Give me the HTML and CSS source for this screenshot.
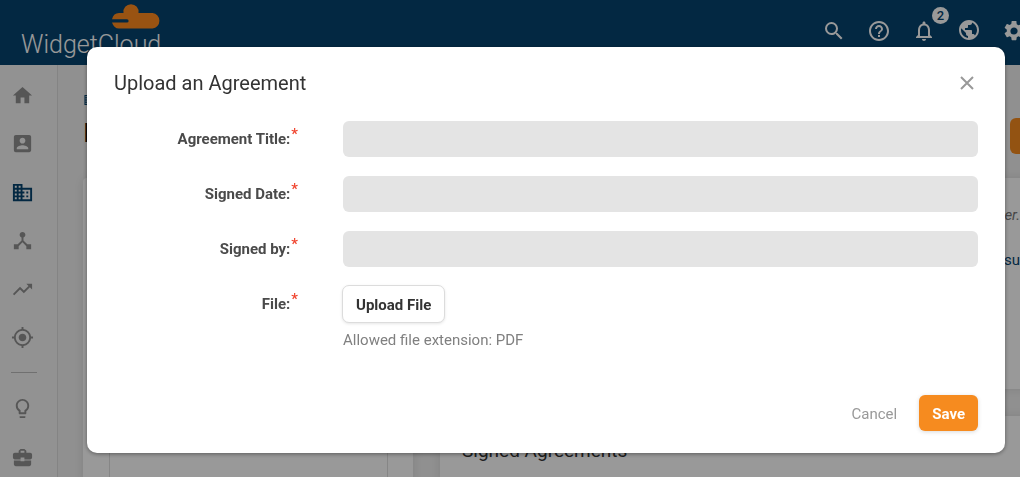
FILE: index.html
```
<!DOCTYPE html>
<html lang="en">
<head>
<meta charset="utf-8">
<title>WidgetCloud</title>
<link rel="stylesheet" href="styles.css">
</head>
<body>
<header class="topbar">
  <a class="logo" href="#">
    <svg class="logo-cloud" width="50" height="25" viewBox="0 0 50 25" aria-hidden="true"><path fill="#ff8a1e" d="M8 9h4.500a7.600 7.600 0 1 1 15 0H41.500a7.800 7.800 0 0 1 0 15.500H8Q3 24.500 1 18.500H16a1.500 1.500 0 0 0 0-3.200H1Q2.500 9 8 9z"/></svg>
    <span class="logo-name">WidgetCloud</span>
  </a>
  <nav class="tools" aria-label="Tools">
    <button class="tool" aria-label="Search"><svg viewBox="0 0 24 24"><path d="M15.500 14h-.79l-.28-.27A6.470 6.470 0 0 0 16 9.500 6.500 6.500 0 1 0 9.500 16c1.610 0 3.090-.59 4.230-1.570l.27.28v.79l5 4.990L20.490 19l-4.990-5zm-6 0C7.010 14 5 11.990 5 9.500S7.010 5 9.500 5 14 7.010 14 9.500 11.990 14 9.500 14z"/></svg></button>
    <button class="tool" aria-label="Help"><svg viewBox="0 0 24 24"><path d="M11 18h2v-2h-2v2zm1-16C6.480 2 2 6.480 2 12s4.480 10 10 10 10-4.480 10-10S17.520 2 12 2zm0 18c-4.410 0-8-3.590-8-8s3.590-8 8-8 8 3.590 8 8-3.590 8-8 8zm0-14c-2.210 0-4 1.790-4 4h2c0-1.100.9-2 2-2s2 .9 2 2c0 2-3 1.750-3 5h2c0-2.250 3-2.500 3-5 0-2.210-1.790-4-4-4z"/></svg></button>
    <button class="tool" aria-label="Notifications"><svg viewBox="0 0 24 24"><path d="M12 22c1.100 0 2-.9 2-2h-4c0 1.100.9 2 2 2zm6-6v-5c0-3.070-1.630-5.640-4.500-6.320V4c0-.83-.67-1.500-1.500-1.500s-1.500.67-1.500 1.500v.68C7.640 5.360 6 7.920 6 11v5l-2 2v1h16v-1l-2-2zm-2 1H8v-6c0-2.480 1.510-4.500 4-4.500s4 2.020 4 4.500v6z"/></svg><span class="badge">2</span></button>
    <button class="tool" aria-label="Language"><svg viewBox="0 0 24 24"><path d="M12 2C6.480 2 2 6.480 2 12s4.480 10 10 10 10-4.480 10-10S17.520 2 12 2zm-1 17.930c-3.950-.49-7-3.850-7-7.930 0-.62.080-1.210.21-1.790L9 15v1c0 1.100.9 2 2 2v1.930zm6.900-2.540c-.26-.81-1-1.390-1.900-1.390h-1v-3c0-.55-.45-1-1-1H8v-2h2c.55 0 1-.45 1-1V7h2c1.100 0 2-.9 2-2v-.41c2.930 1.190 5 4.060 5 7.410 0 2.080-.8 3.970-2.100 5.390z" transform="translate(0 -1)"/></svg></button>
    <button class="tool" aria-label="Settings"><svg viewBox="0 0 24 24"><path d="M19.140 12.940c.04-.3.060-.61.060-.94s-.02-.64-.07-.94l2.030-1.580a.49.49 0 0 0 .12-.61l-1.920-3.320a.488.488 0 0 0-.59-.22l-2.390.96a7 7 0 0 0-1.620-.94l-.36-2.540A.484.484 0 0 0 13.920 2h-3.840c-.24 0-.43.17-.47.41l-.36 2.540c-.59.24-1.130.57-1.620.94l-2.390-.96c-.22-.08-.47 0-.59.22L2.740 8.470c-.12.21-.08.47.12.61l2.030 1.580c-.05.3-.09.63-.09.94s.02.64.07.94l-2.030 1.580a.49.49 0 0 0-.12.61l1.920 3.320c.12.22.37.29.59.22l2.390-.96c.5.38 1.030.7 1.620.94l.36 2.540c.05.24.24.41.48.41h3.840c.24 0 .44-.17.47-.41l.36-2.540c.59-.24 1.130-.56 1.620-.94l2.390.96c.22.08.47 0 .59-.22l1.920-3.320a.47.47 0 0 0-.12-.61l-2.010-1.580zM12 15.600A3.610 3.610 0 0 1 8.400 12c0-1.980 1.620-3.600 3.600-3.600s3.600 1.620 3.600 3.600-1.620 3.600-3.600 3.600z"/></svg></button>
  </nav>
</header>

<div class="shell">
  <nav class="sidebar" aria-label="Main">
    <div class="side-group side-main">
      <a href="#" aria-label="Home"><svg viewBox="0 0 24 24"><path d="M10 20v-6h4v6h5v-8h3L12 3 2 12h3v8z"/></svg></a>
      <a href="#" aria-label="Contacts"><svg viewBox="0 0 24 24"><path d="M3 5v14a2 2 0 0 0 2 2h14c1.100 0 2-.9 2-2V5c0-1.100-.9-2-2-2H5a2 2 0 0 0-2 2zm12 4c0 1.660-1.340 3-3 3s-3-1.340-3-3 1.340-3 3-3 3 1.340 3 3zm-9 8c0-2 4-3.100 6-3.100s6 1.100 6 3.100v1H6v-1z"/></svg></a>
      <a href="#" class="current" aria-label="Companies"><svg viewBox="0 0 24 24"><path d="M12 7V3H2v18h20V7H12zM6 19H4v-2h2v2zm0-4H4v-2h2v2zm0-4H4V9h2v2zm0-4H4V5h2v2zm4 12H8v-2h2v2zm0-4H8v-2h2v2zm0-4H8V9h2v2zm0-4H8V5h2v2zm10 12h-8v-2h2v-2h-2v-2h2v-2h-2V9h8v10zm-2-8h-2v2h2v-2zm0 4h-2v2h2v-2z"/></svg></a>
      <a href="#" aria-label="Network"><svg viewBox="0 0 24 24"><path d="M17 16l-4-4V8.820C14.160 8.400 15 7.300 15 6c0-1.660-1.340-3-3-3S9 4.340 9 6c0 1.300.84 2.400 2 2.820V12l-4 4H3v5h5v-3.050l4-4.200 4 4.200V21h5v-5h-4z"/></svg></a>
      <a href="#" aria-label="Trends"><svg viewBox="0 0 24 24"><path d="M16 6l2.290 2.290-4.880 4.880-4-4L2 16.590 3.410 18l6-6 4 4 6.300-6.290L22 12V6z"/></svg></a>
      <a href="#" aria-label="Targets"><svg viewBox="0 0 24 24"><path d="M12 8c-2.210 0-4 1.790-4 4s1.790 4 4 4 4-1.790 4-4-1.790-4-4-4zm8.940 3A8.994 8.994 0 0 0 13 3.060V1h-2v2.060A8.994 8.994 0 0 0 3.060 11H1v2h2.060A8.994 8.994 0 0 0 11 20.940V23h2v-2.060A8.994 8.994 0 0 0 20.940 13H23v-2h-2.060zM12 19c-3.870 0-7-3.130-7-7s3.130-7 7-7 7 3.130 7 7-3.130 7-7 7z"/></svg></a>
    </div>
    <hr class="side-rule">
    <div class="side-group side-extra">
      <a href="#" aria-label="Ideas"><svg viewBox="0 0 24 24"><path d="M9 21c0 .55.45 1 1 1h4c.55 0 1-.45 1-1v-1H9v1zm3-19C8.140 2 5 5.140 5 9c0 2.380 1.190 4.470 3 5.740V17c0 .55.45 1 1 1h6c.55 0 1-.45 1-1v-2.260c1.810-1.270 3-3.360 3-5.740 0-3.860-3.140-7-7-7zm2.850 11.100l-.85.6V16h-4v-2.300l-.85-.6A4.997 4.997 0 0 1 7 9c0-2.760 2.240-5 5-5s5 2.240 5 5c0 1.630-.8 3.160-2.150 4.100z"/></svg></a>
      <a href="#" aria-label="Business"><svg viewBox="0 0 24 24"><path d="M10 16v-1H3.010L3 19c0 1.110.89 2 2 2h14c1.110 0 2-.89 2-2v-4h-7v1h-4zm10-9h-4.010V5l-2-2h-4l-2 2v2H4c-1.100 0-2 .9-2 2v3c0 1.110.89 2 2 2h6v-2h4v2h6c1.100 0 2-.9 2-2V9c0-1.100-.9-2-2-2zm-6 0h-4V5h4v2z"/></svg></a>
    </div>
  </nav>

  <main class="page">
    <div class="page-head">
      <div class="page-title">
        <svg class="crumb" viewBox="0 0 20 18" aria-hidden="true"><path d="M0 0h10v4h10v14H0zM2 2v2h2V2zm0 4v2h2V6zm0 4v2h2v-2zm0 4v2h2v-2z"/></svg>
        <h1>I</h1>
      </div>
      <button class="page-action" aria-label="Add"></button>
    </div>
    <div class="columns">
      <section class="card profile"><div class="profile-inner"></div></section>
      <div class="stack">
        <section class="card summary">
          <p class="note">er.</p>
          <a class="results" href="#">esu</a>
        </section>
        <section class="card agreements"><h2>Signed Agreements</h2></section>
      </div>
    </div>
  </main>
</div>

<div class="overlay">
  <form class="modal" role="dialog" aria-modal="true" aria-labelledby="modal-title">
    <div class="modal-head">
      <h2 id="modal-title">Upload an Agreement</h2>
      <button type="button" class="close" aria-label="Close"><svg viewBox="0 0 16 16"><path d="M2 2l12 12M14 2L2 14"/></svg></button>
    </div>
    <div class="fields">
      <label for="title">Agreement Title:<span class="req">*</span></label>
      <input id="title" type="text" required>
      <label for="date">Signed Date:<span class="req">*</span></label>
      <input id="date" type="text" required>
      <label for="by">Signed by:<span class="req">*</span></label>
      <input id="by" type="text" required>
      <label for="file">File:<span class="req">*</span></label>
      <div class="file">
        <button type="button" id="file" class="upload">Upload File</button>
        <p class="hint">Allowed file extension: PDF</p>
      </div>
    </div>
    <div class="modal-foot">
      <button type="button" class="cancel">Cancel</button>
      <button type="submit" class="save">Save</button>
    </div>
  </form>
</div>
</body>
</html>
```
FILE: styles.css
```
* { box-sizing: border-box; }
body {
  margin: 0;
  height: 100vh;
  overflow: hidden;
  display: flex;
  flex-direction: column;
  background: #f1f1f1;
  color: #333;
  font: 15px/20px Roboto, "Liberation Sans", sans-serif;
}
h1, h2, p { margin: 0; font-weight: 400; }
a { color: inherit; text-decoration: none; }
button { font: inherit; border: 0; padding: 0; background: none; cursor: pointer; }
svg { display: block; fill: currentColor; }

.topbar {
  flex: none;
  height: 65px;
  display: flex;
  justify-content: space-between;
  background: #06446f;
  color: #fff;
}
.logo { display: flex; flex-direction: column; padding: 4px 0 0 21px; }
.logo-cloud { align-self: flex-end; }
.logo-name { font-size: 25px; line-height: 32px; font-weight: 300; }
.tools { display: flex; gap: 21px; padding-top: 19px; margin-right: -6px; }
.tool { position: relative; width: 24px; height: 24px; color: #fff; }
.badge {
  position: absolute;
  top: -12px;
  left: 20px;
  width: 17px;
  height: 17px;
  border-radius: 50%;
  background: #fff;
  color: #06446f;
  font-size: 13px;
  line-height: 17px;
  font-weight: 500;
}

.shell { flex: 1; min-height: 0; display: flex; overflow: hidden; }
.sidebar {
  flex: none;
  width: 58px;
  padding-top: 19px;
  border-right: 1px solid #dcdcdc;
  background: #f4f4f4;
  color: #8f8f8f;
}
.side-group { display: flex; flex-direction: column; align-items: center; justify-content: space-between; padding-right: 12px; }
.side-group a { width: 23px; height: 23px; }
.side-main { height: 265px; }
.side-extra { gap: 26px; }
.side-rule { margin: 23px 20px 24px 11px; border: 0; border-top: 1px solid #bbb; }
.current { color: #06446f; }

.page { flex: 1; min-width: 0; overflow: hidden; padding: 30px 0 0 25px; }
.page-head { display: flex; justify-content: space-between; height: 83px; }
.crumb { width: 12px; height: 10px; margin-left: 1px; color: #06446f; }
.page-title h1 { font-size: 26px; line-height: 32px; margin-top: 12px; color: #111; }
.page-action { width: 60px; height: 36px; margin: 23px -50px 0 0; border-radius: 6px; background: #f68b1f; }
.columns { display: grid; grid-template-columns: 330px 1fr; gap: 27px; margin-right: -30px; }
.card { background: #fff; border-radius: 4px; box-shadow: 0 0 12px rgba(0, 0, 0, .1); }
.profile { padding: 26px 25px 0 26px; }
.profile-inner { height: 100%; border: 1px solid #e0e0e0; border-bottom: 0; }
.stack { display: grid; gap: 27px; }
.summary { height: 211px; padding: 27px 30px; text-align: right; }
.note { font-style: italic; color: #777; }
.results { display: block; margin-top: 25px; color: #06446f; }
.agreements { padding: 23px 22px; }
.agreements h2 { font-size: 19px; line-height: 24px; }

.overlay {
  position: fixed;
  inset: 0;
  padding: 47px 15px 24px 87px;
  background: rgba(0, 0, 0, .4);
}
.modal {
  padding: 24px 27px 22px;
  border-radius: 10px;
  background: #fff;
  box-shadow: 0 1px 4px rgba(0, 0, 0, .4);
}
.modal-head { display: flex; justify-content: space-between; align-items: center; margin-bottom: 26px; }
.modal-head h2 { font-size: 20px; line-height: 24px; }
.close { width: 16px; height: 16px; margin-right: 3px; color: #999; }
.close svg { fill: none; stroke: currentColor; stroke-width: 2; }
.fields { display: grid; grid-template-columns: 184px 1fr; gap: 19px 45px; }
.fields label { line-height: 36px; text-align: right; font-weight: 700; color: #4a4a4a; }
.req { margin-left: 1px; position: relative; top: -5px; font-weight: 500; color: #f0442e; }
.fields input { width: 100%; height: 36px; padding: 0 10px; border: 0; border-radius: 6px; background: #e4e4e4; font: inherit; }
.upload {
  height: 38px;
  margin: -1px;
  padding: 1px 13px 0;
  border: 1px solid #dcdcdc;
  border-radius: 7px;
  background: #fff;
  box-shadow: 0 1px 3px rgba(0, 0, 0, .1);
  color: #333;
  font-weight: 700;
}
.hint { margin-top: 8px; color: #808080; }
.modal-foot { display: flex; justify-content: flex-end; gap: 22px; margin-top: 45px; }
.cancel { padding-top: 1px; color: #999; }
.save {
  height: 36px;
  padding: 1px 13px 0;
  border-radius: 6px;
  background: #f68b1f;
  box-shadow: 0 1px 4px rgba(0, 0, 0, .15);
  color: #fff;
  font-weight: 700;
}
```
